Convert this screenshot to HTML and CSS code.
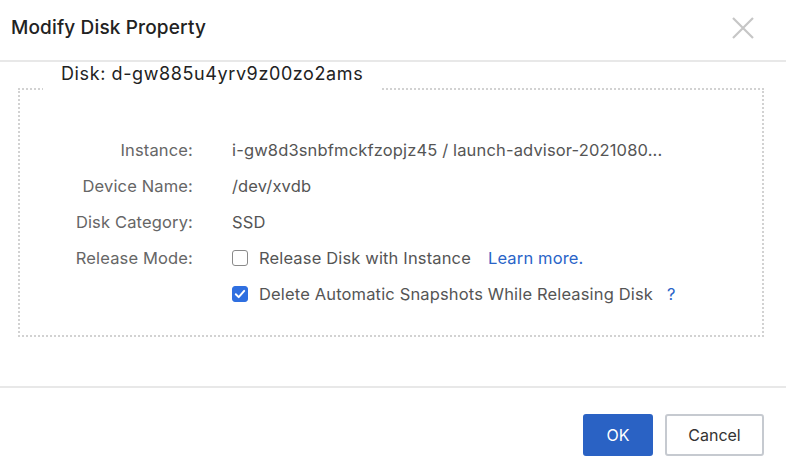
FILE: index.html
```html
<!DOCTYPE html>
<html>
<head>
<meta charset="utf-8">
<link rel="stylesheet" href="styles.css">
</head>
<body>
<div class="dialog">
  <div class="header">
    <h1 class="title">Modify Disk Property</h1>
    <button class="close" aria-label="Close">
      <svg width="22" height="22" viewBox="0 0 22 22"><path d="M1 1 L21 21 M21 1 L1 21" stroke="#c6c6c6" stroke-width="2.2" fill="none"/></svg>
    </button>
  </div>
  <div class="body">
    <fieldset class="group">
      <legend class="legend">Disk: d-gw885u4yrv9z00zo2ams</legend>
      <div class="form">
        <div class="label">Instance:</div>
        <div class="value">i-gw8d3snbfmckfzopjz45 / launch-advisor-2021080...</div>
        <div class="label">Device Name:</div>
        <div class="value">/dev/xvdb</div>
        <div class="label">Disk Category:</div>
        <div class="value">SSD</div>
        <div class="label">Release Mode:</div>
        <div class="value">
          <span class="check"></span>
          <span class="check-text">Release Disk with Instance</span>
          <a class="link learn">Learn more.</a>
        </div>
        <div class="label"></div>
        <div class="value">
          <span class="check checked"><svg width="16" height="16" viewBox="0 0 16 16"><path d="M3.8 8.3 L6.7 11.1 L12.2 4.9" stroke="#fff" stroke-width="2" fill="none" stroke-linecap="round" stroke-linejoin="round"/></svg></span>
          <span class="check-text">Delete Automatic Snapshots While Releasing Disk</span>
          <a class="link help">?</a>
        </div>
      </div>
    </fieldset>
  </div>
  <div class="footer">
    <button class="btn primary">OK</button>
    <button class="btn">Cancel</button>
  </div>
</div>
</body>
</html>
```

FILE: styles.css
```css
* { box-sizing: border-box; }
html, body { margin: 0; padding: 0; background: #fff; }
body {
  font-family: Inter, "Noto Sans", "Liberation Sans", sans-serif;
  color: #555;
}
.dialog {
  width: 786px;
  height: 470px;
  display: flex;
  flex-direction: column;
}
.header {
  height: 62px;
  display: flex;
  align-items: center;
  justify-content: space-between;
  padding: 0 32px 5px 11px;
  border-bottom: 2px solid #e8e8e8;
}
.title {
  margin: 0;
  font-size: 19px;
  font-weight: 500;
  color: #222;
  letter-spacing: 0.15px;
}
.close {
  border: 0;
  background: none;
  padding: 0;
  width: 22px;
  height: 22px;
  display: flex;
}
.body {
  flex: 1;
  padding: 1px 22px 0 18px;
  border-bottom: 2px solid #e8e8e8;
}
.group {
  margin: 0;
  padding: 17px 0 23px 0;
  border: 2px dotted #d2d2d2;
  min-width: 0;
}
.legend {
  margin-left: 23px;
  padding: 0 17px 30px 18px;
  font-size: 18px;
  line-height: 22px;
  letter-spacing: 0.6px;
  color: #222;
}
.form {
  display: grid;
  grid-template-columns: 173px 1fr;
  column-gap: 39px;
  grid-auto-rows: 36px;
  font-size: 16.5px;
  letter-spacing: 0.15px;
  align-items: center;
}
.label {
  text-align: right;
  color: #666;
}
.value {
  display: flex;
  align-items: center;
  color: #555;
  white-space: nowrap;
}
.check {
  width: 16px;
  height: 16px;
  border: 1.5px solid #8a8a8a;
  border-radius: 3px;
  margin-right: 11px;
  display: flex;
  flex: none;
}
.check.checked {
  background: #2f6fe0;
  border-color: #2f6fe0;
  align-items: center;
  justify-content: center;
}
.check.checked svg { margin: -1.5px; }
.link {
  color: #2a64c8;
  cursor: pointer;
}
.learn { margin-left: 17px; }
.help { margin-left: 14px; }
.footer {
  height: 82px;
  display: flex;
  justify-content: flex-end;
  align-items: flex-start;
  gap: 12px;
  padding: 26px 22px 0 0;
}
.btn {
  height: 42px;
  min-width: 99px;
  border: 2px solid #c6cad0;
  border-radius: 3px;
  background: #fff;
  font-family: Inter, "Noto Sans", "Liberation Sans", sans-serif;
  font-size: 16px;
  color: #333;
  padding: 0 20px;
}
.btn.primary {
  min-width: 70px;
  background: #2a62c4;
  border-color: #2a62c4;
  color: #fff;
}
```
